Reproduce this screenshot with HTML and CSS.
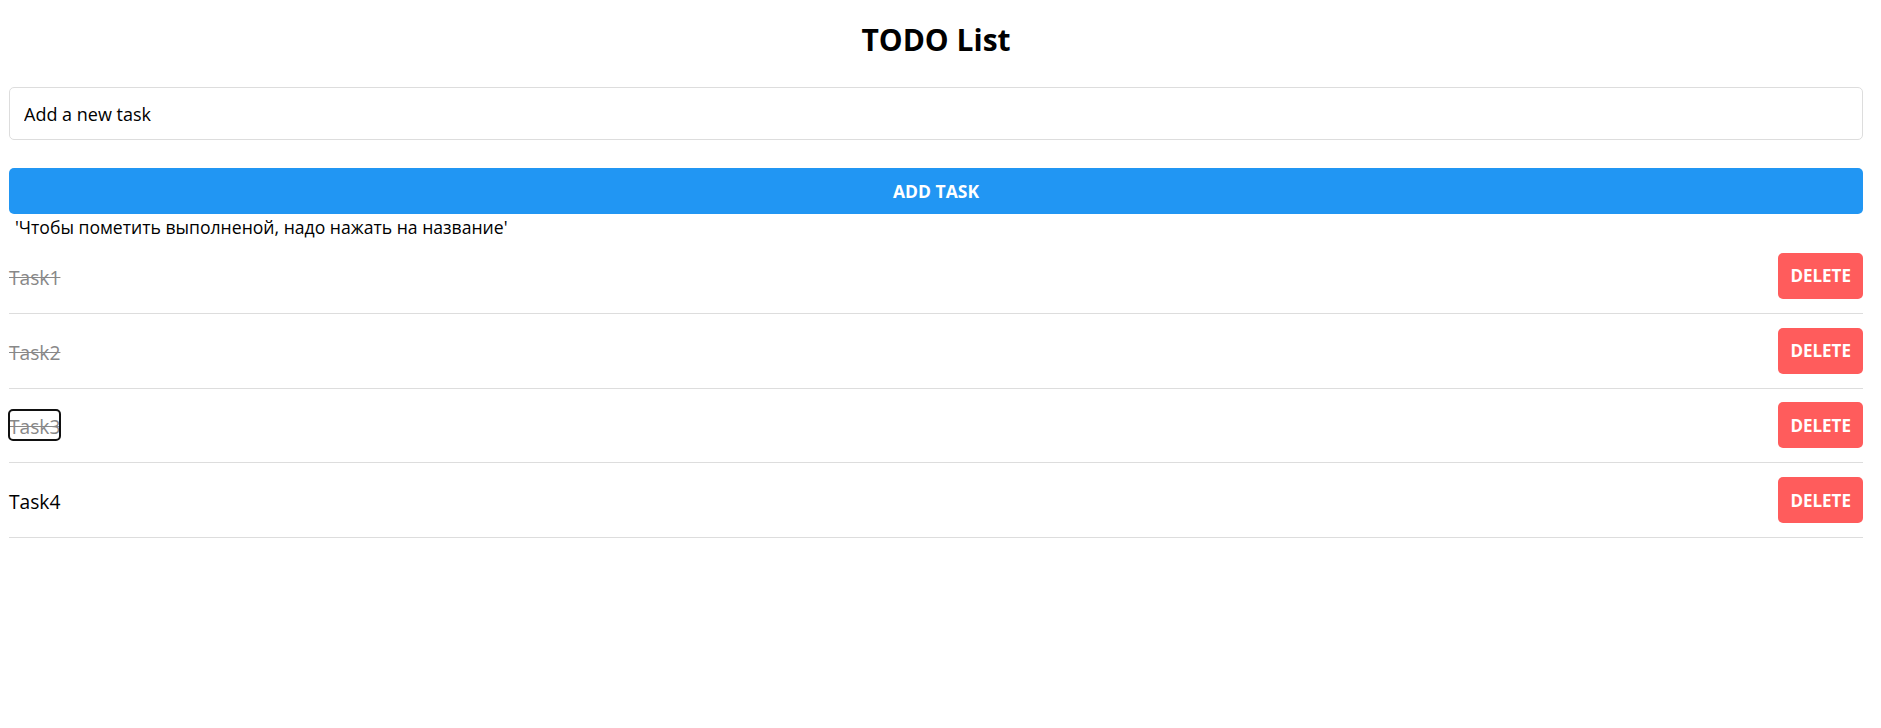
FILE: index.html
```html
<!DOCTYPE html>
<html lang="ru">
<head>
<meta charset="utf-8">
<title>TODO List</title>
<link rel="stylesheet" href="styles.css">
</head>
<body>
<div class="app">
  <h1 class="title">TODO List</h1>
  <input class="task-input" type="text" value="Add a new task">
  <button class="add-btn">ADD TASK</button>
  <div class="hint">'Чтобы пометить выполненой, надо нажать на название'</div>
  <ul class="task-list">
    <li class="task-row">
      <span class="task-name done">Task1</span>
      <button class="delete-btn">DELETE</button>
    </li>
    <li class="task-row">
      <span class="task-name done">Task2</span>
      <button class="delete-btn">DELETE</button>
    </li>
    <li class="task-row">
      <span class="task-name done focused">Task3</span>
      <button class="delete-btn">DELETE</button>
    </li>
    <li class="task-row">
      <span class="task-name">Task4</span>
      <button class="delete-btn">DELETE</button>
    </li>
  </ul>
</div>
</body>
</html>
```

FILE: styles.css
```css
* {
  box-sizing: border-box;
}

body {
  margin: 0;
  background: #ffffff;
  font-family: "Open Sans", "Noto Sans", sans-serif;
  color: #000000;
}

.app {
  padding: 0 18px 0 9px;
  display: flex;
  flex-direction: column;
}

.title {
  margin: 22px 0 29px;
  font-size: 30px;
  line-height: 36px;
  font-weight: 700;
  text-align: center;
}

.task-input {
  display: block;
  width: 100%;
  height: 53px;
  margin: 0;
  padding: 0 14px;
  border: 1px solid #dddddd;
  border-radius: 5px;
  font-family: inherit;
  font-size: 18px;
  color: #000000;
  background: #ffffff;
  outline: none;
}

.add-btn {
  display: block;
  width: 100%;
  height: 46px;
  margin: 28px 0 0;
  border: none;
  border-radius: 5px;
  background: #2196f3;
  color: #ffffff;
  font-family: inherit;
  font-size: 17.5px;
  font-weight: 700;
  padding: 0;
}

.hint {
  padding: 2px 0 0 6px;
  font-size: 17.6px;
  line-height: 23px;
  height: 25px;
}

.task-list {
  list-style: none;
  margin: 0;
  padding: 0;
}

.task-row {
  display: flex;
  align-items: center;
  justify-content: space-between;
  padding: 13.9px 0;
  border-bottom: 1px solid #dddddd;
}

.task-name {
  font-size: 19.2px;
  line-height: 27px;
  padding-top: 3px;
  color: #000000;
  border-radius: 4px;
}

.task-name.done {
  color: #888888;
  text-decoration: line-through;
}

.task-name.focused {
  outline: 2px solid #111111;
  outline-offset: -1px;
}

.delete-btn {
  height: 46px;
  padding: 0 12px;
  border: none;
  border-radius: 5px;
  background: #ff5c5c;
  color: #ffffff;
  font-family: inherit;
  font-size: 17px;
  font-weight: 700;
}
```
